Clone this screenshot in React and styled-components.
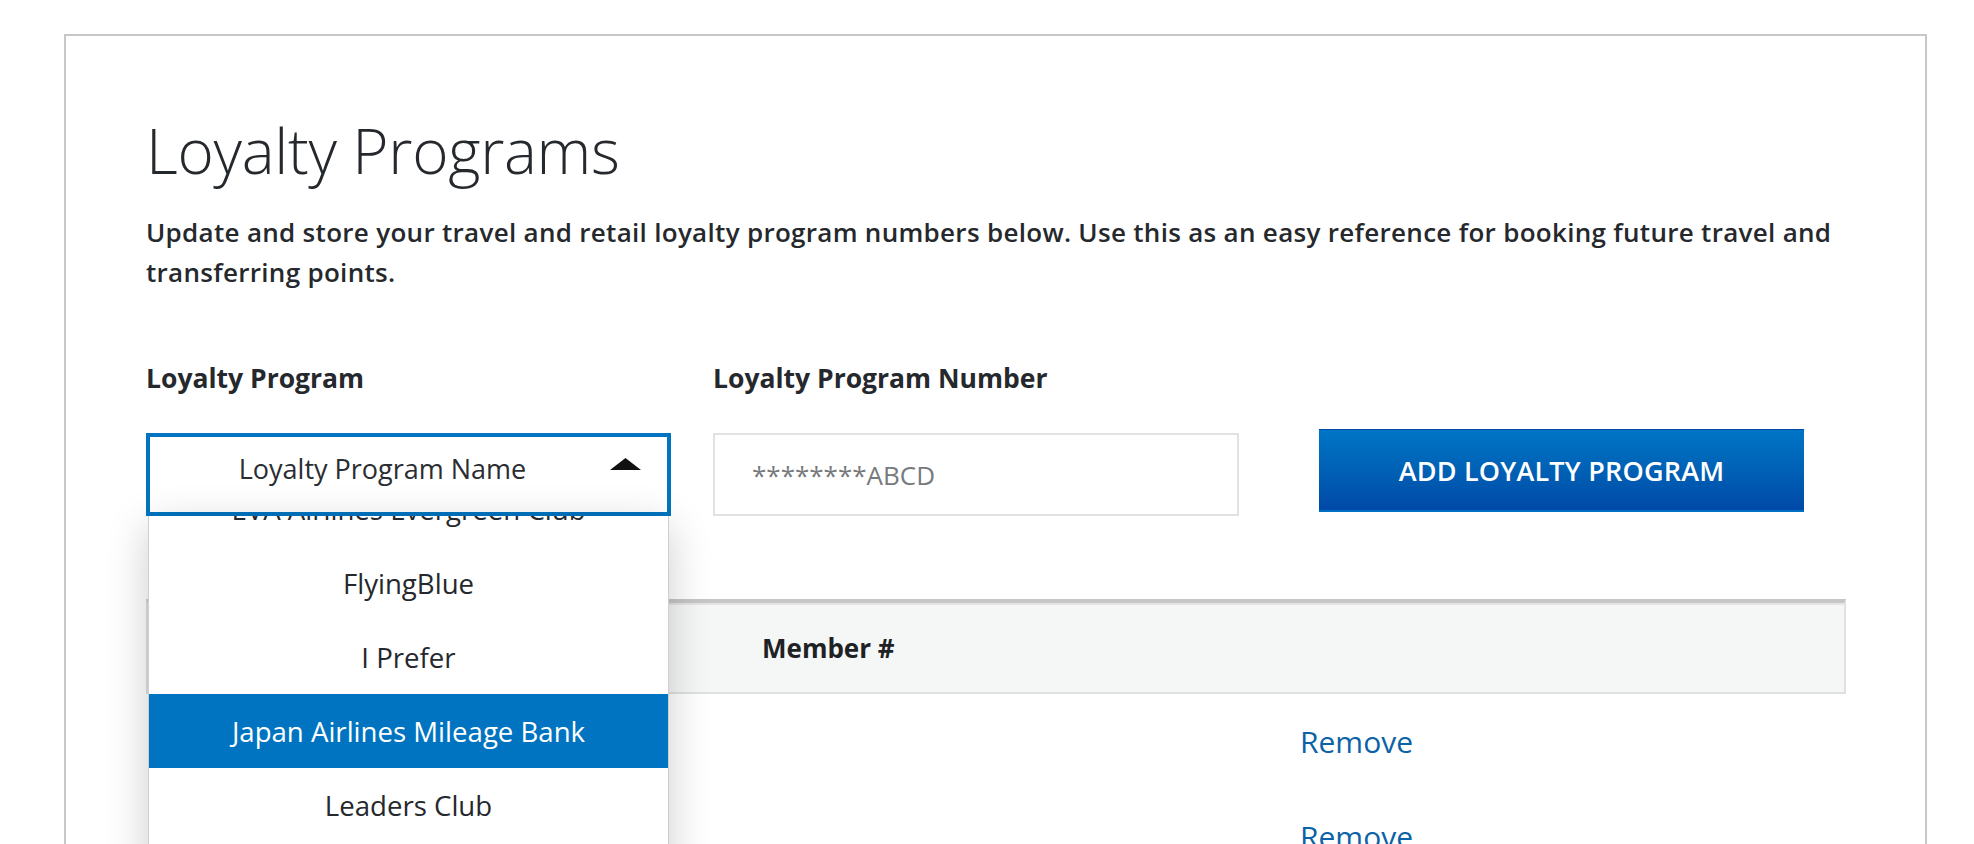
import React, { useLayoutEffect, useRef } from "react";
import styled, { createGlobalStyle } from "styled-components";

const GlobalStyle = createGlobalStyle`
  html, body {
    margin: 0;
    padding: 0;
    overflow: hidden;
    background: #ffffff;
  }
  body {
    font-family: "Open Sans", "Noto Sans", Arial, sans-serif;
    color: #25282c;
  }
  * { box-sizing: border-box; }
`;

const Page = styled.div`
  padding: 34px 0 0 64px;
`;

const Panel = styled.section`
  width: 1863px;
  min-height: 900px;
  border: 2px solid #c8c8c8;
  border-bottom: 0;
  padding: 78px 79px 0 80px;
`;

const Title = styled.h1`
  margin: 0;
  font-size: 62px;
  line-height: 72px;
  font-weight: 300;
  letter-spacing: -0.3px;
  color: #25282c;
`;

const Intro = styled.p`
  margin: 26px 0 0;
  font-size: 26px;
  line-height: 40px;
  font-weight: 600;
  letter-spacing: 0.3px;
  color: #25282c;
`;

const FormRow = styled.div`
  display: flex;
  align-items: flex-end;
  gap: 42px;
  margin-top: 68px;
`;

const Field = styled.div`
  display: flex;
  flex-direction: column;
  gap: 37px;
  width: ${(p) => p.$width}px;
`;

const Label = styled.label`
  font-size: 26.5px;
  line-height: 36px;
  font-weight: 700;
  color: #25282c;
`;

const SelectWrap = styled.div`
  position: relative;
`;

const SelectBox = styled.div`
  display: flex;
  align-items: center;
  height: 83px;
  border: 4px solid #0074c1;
  background: #ffffff;
  padding: 0 26px 12px 0;
`;

const SelectValue = styled.span`
  flex: 1;
  text-align: center;
  font-size: 27px;
  font-weight: 400;
  color: #2a2d31;
`;

const Caret = styled.svg`
  flex: none;
  margin-left: -5px;
  margin-top: -10px;
`;

const OptionList = styled.ul`
  position: absolute;
  top: 100%;
  left: 2px;
  width: 521px;
  height: 444px;
  margin: 0;
  padding: 0;
  list-style: none;
  overflow-y: auto;
  background: #ffffff;
  border-left: 1px solid #cfcfcf;
  border-right: 1px solid #cfcfcf;
  box-shadow: 0 10px 40px rgba(0, 0, 0, 0.2);
  z-index: 5;
  scrollbar-width: none;
  &::-webkit-scrollbar { display: none; }
`;

const Option = styled.li`
  height: 74px;
  display: flex;
  align-items: center;
  justify-content: center;
  font-size: 27.6px;
  font-weight: 400;
  color: ${(p) => (p.$active ? "#ffffff" : "#25282c")};
  background: ${(p) => (p.$active ? "#0074c1" : "#ffffff")};
`;

const TextInput = styled.input`
  height: 83px;
  width: 100%;
  border: 2px solid #e2e2e2;
  padding: 0 0 0 37px;
  font-family: inherit;
  font-size: 26px;
  color: #25282c;
  outline: none;
  &::placeholder { color: #777a7d; }
`;

const AddButton = styled.button`
  width: 485px;
  height: 83px;
  margin: 0 0 4px 38px;
  border: 0;
  border-top: 1px solid #0048a3;
  border-bottom: 2px solid #0070c4;
  background: linear-gradient(to bottom, #0075c6 0%, #0061b5 50%, #0049a7 100%);
  color: #ffffff;
  font-family: inherit;
  font-size: 27px;
  font-weight: 600;
  letter-spacing: 0.2px;
  cursor: pointer;
`;

const Table = styled.div`
  margin-top: 83px;
  width: 1700px;
`;

const HeaderRow = styled.div`
  display: grid;
  grid-template-columns: 614px 538px 1fr;
  align-items: center;
  height: 95px;
  background: #f5f7f6;
  border: 2px solid #e0e0e0;
  border-top: 4px solid #c6c6c6;
  box-shadow: inset 0 2px 0 #e4e4e4;
`;

const HeadCell = styled.div`
  font-size: 26px;
  font-weight: 700;
  color: #1f2225;
`;

const Row = styled.div`
  display: grid;
  grid-template-columns: 614px 538px 1fr;
  align-items: center;
  height: 95px;
  border-left: 2px solid transparent;
`;

const Cell = styled.div`
  font-size: 27px;
  color: #25282c;
`;

const RemoveLink = styled.a`
  font-size: 30px;
  font-weight: 400;
  color: #0b62a6;
  text-decoration: none;
  cursor: pointer;
`;

const programs = [
  "EVA Airlines Evergreen Club",
  "FlyingBlue",
  "I Prefer",
  "Japan Airlines Mileage Bank",
  "Leaders Club",
  "Qantas Frequent Flyer",
  "Qatar Privilege Club",
  "Singapore KrisFlyer",
  "Thai Royal Orchid Plus",
];

const savedRows = [{ id: 1 }, { id: 2 }];

function ProgramSelect() {
  const listRef = useRef(null);
  useLayoutEffect(() => {
    if (listRef.current) listRef.current.scrollTop = 44;
  }, []);
  return (
    <SelectWrap>
      <SelectBox>
        <SelectValue>Loyalty Program Name</SelectValue>
        <Caret width="31" height="12" viewBox="0 0 31 12">
          <polygon points="0,12 15.5,0 31,12" fill="#111" />
        </Caret>
      </SelectBox>
      <OptionList ref={listRef}>
        {programs.map((p) => (
          <Option key={p} $active={p === "Japan Airlines Mileage Bank"}>
            {p}
          </Option>
        ))}
      </OptionList>
    </SelectWrap>
  );
}

export default function App() {
  return (
    <>
      <GlobalStyle />
      <Page>
        <Panel>
          <Title>Loyalty Programs</Title>
          <Intro>
            Update and store your travel and retail loyalty program numbers below. Use this as an easy
            reference for booking future travel and transferring points.
          </Intro>
          <FormRow>
            <Field $width={525}>
              <Label>Loyalty Program</Label>
              <ProgramSelect />
            </Field>
            <Field $width={526}>
              <Label>Loyalty Program Number</Label>
              <TextInput placeholder="********ABCD" />
            </Field>
            <AddButton>ADD LOYALTY PROGRAM</AddButton>
          </FormRow>
          <Table>
            <HeaderRow>
              <HeadCell />
              <HeadCell>Member #</HeadCell>
              <HeadCell />
            </HeaderRow>
            {savedRows.map((r) => (
              <Row key={r.id}>
                <Cell />
                <Cell />
                <Cell>
                  <RemoveLink>Remove</RemoveLink>
                </Cell>
              </Row>
            ))}
          </Table>
        </Panel>
      </Page>
    </>
  );
}
